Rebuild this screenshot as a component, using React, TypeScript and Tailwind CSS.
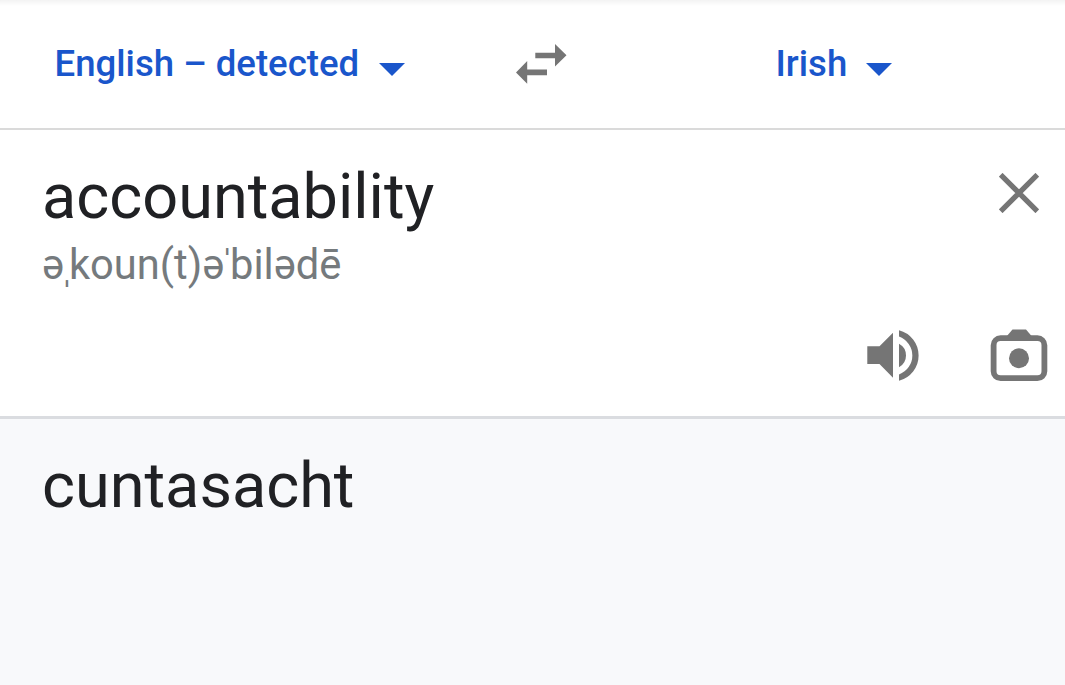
const CaretDown = () => (
  <svg width="26" height="13" viewBox="0 0 26 13" className="mt-[11px] fill-[#1a56cb]">
    <path d="M0 0h26L13 13z" />
  </svg>
);

const SwapIcon = () => (
  <svg width="52" height="40" viewBox="0 0 52 40" className="fill-[#757575]">
    <path d="M19.300 8.700H39V0L50.500 11.300 39 22.500v-8.200H19.300zM31 25.500H11.200V17L0 28.500l11.200 11.300v-8.500H31z" />
  </svg>
);

const CloseIcon = () => (
  <svg width="40" height="40" viewBox="0 0 40 40" className="stroke-[#757575]">
    <path d="M1.700 1.700l36.600 36.600M38.300 1.700L1.700 38.300" strokeWidth="5.2" />
  </svg>
);

const SpeakerIcon = () => (
  <svg width="52" height="53" viewBox="0 -1 52 53" className="fill-[#757575]">
    <path d="M.3 16.300v17.700h12.200L26 47.700v-45L12.500 16.300z" />
    <path d="M32 13.800a13.300 13.300 0 0 1 0 23.400z" />
    <path d="M32 .3a26 26 0 0 1 0 50.400v-6.200a20.200 20.200 0 0 0 0-38z" />
  </svg>
);

const CameraIcon = () => (
  <svg width="58" height="53" viewBox="0 0 58 53" className="fill-[#757575]">
    <path d="M16.500 7.500L22.500.4h13.500l6 7.100z" />
    <rect x="3.600" y="9.200" width="50.800" height="40" rx="7" fill="none" stroke="#757575" strokeWidth="5.8" />
    <circle cx="29" cy="29.300" r="10" />
  </svg>
);

const App = () => {
  return (
    <div className="flex h-screen w-full flex-col overflow-hidden bg-white font-[Roboto,sans-serif] text-[#202124]">
      <div className="h-[6px] shrink-0 bg-linear-to-b from-[#f3f3f3] to-white" />
      <header className="flex h-[124px] shrink-0 border-b-2 border-[#dadada] text-[36.6px] leading-[42px] font-medium text-[#1a56cb]">
        <button className="flex h-[80px] w-[516px] items-center gap-5 pt-[35px] pl-[54.5px]">
          <span className="whitespace-nowrap">English – detected</span>
          <CaretDown />
        </button>
        <button className="w-[52px] pb-[6px]">
          <SwapIcon />
        </button>
        <button className="flex h-[80px] items-center gap-[19px] pt-[35px] pl-[207.5px]">
          <span>Irish</span>
          <CaretDown />
        </button>
      </header>

      <main className="flex h-[289px] shrink-0 flex-col border-b-[3px] border-[#dadce0]">
        <div className="flex justify-between pt-[29px] pr-[26px] pl-[42px]">
          <div>
            <p className="text-[63px] leading-[75px]">accountability</p>
            {/* stress marks sit tight against the letters around them */}
            <p className="pt-px text-[41.7px] leading-[60px] text-[#757a7d]">
              <span className="tracking-[-4px]">ə</span>
              <span className="font-medium tracking-[-5px]">ˌ</span>koun(t)
              <span className="tracking-[-4px]">ə</span>
              <span className="font-medium tracking-[-4px]">ˈ</span>bilədē
            </p>
          </div>
          <button className="mt-[14px] h-10">
            <CloseIcon />
          </button>
        </div>
        <div className="flex items-start justify-end gap-[71px] pt-[34px] pr-[17px]">
          <SpeakerIcon />
          <CameraIcon />
        </div>
      </main>

      <section className="grow bg-[#f8f9fb] pt-[29px] pl-[42px]">
        <p className="text-[63px] leading-[75px]">cuntasacht</p>
      </section>
    </div>
  );
};

export default App;
